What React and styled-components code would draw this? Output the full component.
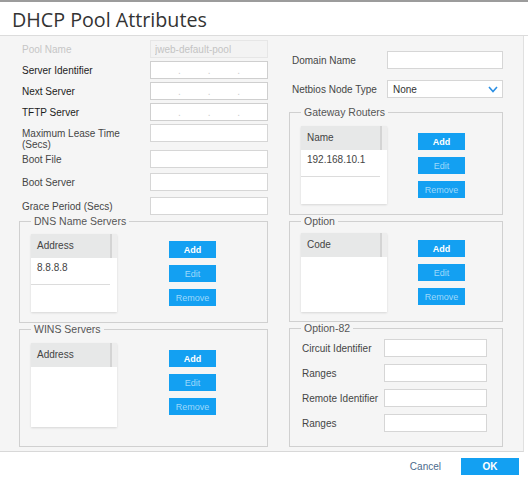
import React from 'react'
import styled, { createGlobalStyle } from 'styled-components'

const GlobalStyle = createGlobalStyle`
  body {
    margin: 0;
    background: #fff;
    font-family: "Liberation Sans", Arial, sans-serif;
  }
`

function IpInput() {
  return (
    <IpBox>
      <Octet />
      <Dot>.</Dot>
      <Octet />
      <Dot>.</Dot>
      <Octet />
      <Dot>.</Dot>
      <Octet />
    </IpBox>
  )
}

function ListTable({ title, rows = [], height }) {
  return (
    <Table $h={height}>
      <TableHead>
        <HeadCell>{title}</HeadCell>
        <HeadGutter />
      </TableHead>
      {rows.map((r) => (
        <TableRow key={r}>{r}</TableRow>
      ))}
    </Table>
  )
}

function Actions({ offset }) {
  return (
    <ActionColumn $offset={offset}>
      <ActionButton>Add</ActionButton>
      <ActionButton disabled>Edit</ActionButton>
      <ActionButton disabled>Remove</ActionButton>
    </ActionColumn>
  )
}

function ListGroup({ legend, title, rows, height, tableHeight, pt, offset }) {
  return (
    <Group $h={height} $pt={pt}>
      <Legend>{legend}</Legend>
      <GroupBody>
        <ListTable title={title} rows={rows} height={tableHeight} />
        <Actions offset={offset} />
      </GroupBody>
    </Group>
  )
}

function App() {
  return (
    <>
      <GlobalStyle />
      <Dialog>
        <Header>
          <Title>DHCP Pool Attributes</Title>
        </Header>

        <Body>
          <Column>
            <FieldRow $h={21}>
              <Label $muted>Pool Name</Label>
              <TextBox disabled readOnly value='jweb-default-pool' />
            </FieldRow>
            <FieldRow $h={21}>
              <Label $dark>Server Identifier</Label>
              <IpInput />
            </FieldRow>
            <FieldRow $h={21}>
              <Label $dark>Next Server</Label>
              <IpInput />
            </FieldRow>
            <FieldRow $h={21}>
              <Label $dark>TFTP Server</Label>
              <IpInput />
            </FieldRow>
            <FieldRow $h={26}>
              <Label>
                Maximum Lease Time
                <br />
                (Secs)
              </Label>
              <TextBox />
            </FieldRow>
            <FieldRow $h={23}>
              <Label>Boot File</Label>
              <TextBox />
            </FieldRow>
            <FieldRow $h={24}>
              <Label>Boot Server</Label>
              <TextBox />
            </FieldRow>
            <FieldRow $h={18}>
              <Label>Grace Period (Secs)</Label>
              <TextBox />
            </FieldRow>

            <ListGroup
              legend='DNS Name Servers'
              title='Address'
              rows={['8.8.8.8']}
              height={108}
              tableHeight={78}
              pt={6}
              offset={52}
            />
            <ListGroup
              legend='WINS Servers'
              title='Address'
              height={124}
              tableHeight={84}
              pt={7}
              offset={52}
            />
          </Column>

          <RightColumn>
            <FieldRow $h={29}>
              <Label $w={98}>Domain Name</Label>
              <TextBox $w={116} />
            </FieldRow>
            <FieldRow $h={26}>
              <Label $w={98}>Netbios Node Type</Label>
              <SelectBox>
                <span>None</span>
                <svg width='10' height='7' viewBox='0 0 10 7'>
                  <polyline points='1,1 5,5.5 9,1' fill='none' stroke='#2b8fe4' strokeWidth='1.6' />
                </svg>
              </SelectBox>
            </FieldRow>

            <ListGroup
              legend='Gateway Routers'
              title='Name'
              rows={['192.168.10.1']}
              height={109}
              tableHeight={78}
              pt={7}
              offset={31}
            />
            <ListGroup
              legend='Option'
              title='Code'
              height={107}
              tableHeight={79}
              pt={5}
              offset={31}
            />

            <Group $h={125} $pt={4}>
              <Legend>Option-82</Legend>
              <FieldRow $h={25}>
                <Label $w={83} $pl={1}>Circuit Identifier</Label>
                <TextBox $w={103} />
              </FieldRow>
              <FieldRow $h={25}>
                <Label $w={83} $pl={1}>Ranges</Label>
                <TextBox $w={103} />
              </FieldRow>
              <FieldRow $h={25}>
                <Label $w={83} $pl={1}>Remote Identifier</Label>
                <TextBox $w={103} />
              </FieldRow>
              <FieldRow $h={25}>
                <Label $w={83} $pl={1}>Ranges</Label>
                <TextBox $w={103} />
              </FieldRow>
            </Group>
          </RightColumn>
        </Body>

        <Footer>
          <LinkButton>Cancel</LinkButton>
          <PrimaryButton>OK</PrimaryButton>
        </Footer>
      </Dialog>
    </>
  )
}

const Dialog = styled.div`
  width: 528px;
  height: 481px;
  box-sizing: border-box;
  border-top: 2px solid #9c9c9c;
  background: #fff;
  display: flex;
  flex-direction: column;
`

const Header = styled.div`
  height: 34px;
  box-sizing: border-box;
  padding: 6px 0 0 12px;
  border-bottom: 1px solid #dcdcdc;
`

const Title = styled.h1`
  margin: 0;
  font-family: "Open Sans", "Liberation Sans", sans-serif;
  font-weight: 400;
  font-size: 19.7px;
  line-height: 24px;
  color: #333;
`

const Body = styled.div`
  width: 524px;
  height: 416px;
  box-sizing: border-box;
  display: grid;
  grid-template-columns: 249px 214px;
  column-gap: 21px;
  align-items: start;
  padding: 4px 0 0 19px;
  background: #f5f5f5;
  border-right: 1px solid #e0e0e0;
  border-bottom: 1px solid #d8d8d8;
`

const Column = styled.div`
  display: flex;
  flex-direction: column;
`

const RightColumn = styled(Column)`
  margin-top: 11px;
`

const FieldRow = styled.div`
  display: flex;
  align-items: flex-start;
  height: ${(p) => p.$h}px;
  flex-shrink: 0;
`

const Label = styled.label`
  box-sizing: border-box;
  width: ${(p) => p.$w || 131}px;
  padding: 4px 0 0 ${(p) => p.$pl ?? 3}px;
  font-size: 10px;
  line-height: 11px;
  white-space: nowrap;
  color: ${(p) => (p.$muted ? '#c6c6c6' : p.$dark ? '#1c1c1c' : '#454545')};
`

const TextBox = styled.input`
  box-sizing: border-box;
  width: ${(p) => p.$w || 118}px;
  height: 18px;
  margin: 0;
  padding: 0 4px;
  border: 1px solid #d6d6d6;
  border-radius: 0;
  background: #fff;
  font: 10px "Liberation Sans", Arial, sans-serif;
  color: #333;
  outline: none;

  &:disabled {
    background: #f3f3f3;
    border-color: #e6e6e6;
    color: #c4c4c4;
  }
`

const IpBox = styled.div`
  box-sizing: border-box;
  width: 118px;
  height: 18px;
  display: flex;
  align-items: flex-end;
  border: 1px solid #cfcfcf;
  background: #fff;
`

const Octet = styled.span`
  flex: 1;
`

const Dot = styled.span`
  font-size: 10px;
  line-height: 14px;
  color: #cdcdcd;
`

const SelectBox = styled.div`
  box-sizing: border-box;
  width: 116px;
  height: 18px;
  display: flex;
  align-items: center;
  justify-content: space-between;
  padding: 0 4px 0 5px;
  border: 1px solid #d6d6d6;
  background: #fff;
  font-size: 10px;
  color: #333;
`

const Group = styled.fieldset`
  box-sizing: border-box;
  height: ${(p) => p.$h}px;
  min-width: 0;
  margin: 0;
  padding: ${(p) => p.$pt}px 11px 0;
  border: 1px solid #d0d0d0;
  flex-shrink: 0;
`

const Legend = styled.legend`
  padding: 0 3px;
  font-size: 10.5px;
  line-height: 13px;
  color: #555;
`

const GroupBody = styled.div`
  display: flex;
  align-items: flex-start;
`

const Table = styled.div`
  box-sizing: border-box;
  width: 86px;
  height: ${(p) => p.$h}px;
  display: flex;
  flex-direction: column;
  background: #fff;
  box-shadow: 0 1px 2px rgba(0, 0, 0, 0.12);
`

const TableHead = styled.div`
  display: flex;
  height: 24px;
  flex-shrink: 0;
  background: #e7e8e8;
`

const HeadCell = styled.div`
  flex: 1;
  padding: 6px 0 0 6px;
  font-size: 10px;
  line-height: 12px;
  color: #444;
`

const HeadGutter = styled.div`
  width: 5px;
  border-left: 2px solid #d4d4d4;
  background: #ededed;
`

const TableRow = styled.div`
  box-sizing: border-box;
  width: 79px;
  height: 27px;
  padding: 4px 0 0 6px;
  border-bottom: 1px solid #dcdcdc;
  font-size: 10px;
  line-height: 12px;
  color: #444;
`

const ActionColumn = styled.div`
  display: flex;
  flex-direction: column;
  gap: 7px;
  padding-top: 7px;
  margin-left: ${(p) => p.$offset}px;
`

const ActionButton = styled.button`
  width: 47px;
  height: 17px;
  padding: 0;
  border: 0;
  border-radius: 0;
  background: #13a0f2;
  font: ${(p) => (p.disabled ? 400 : 700)} 9px "Liberation Sans", Arial, sans-serif;
  color: ${(p) => (p.disabled ? '#9ed8fb' : '#fff')};
`

const Footer = styled.div`
  flex: 1;
  display: flex;
  align-items: center;
  justify-content: flex-end;
  gap: 20px;
  padding-right: 9px;
`

const LinkButton = styled.button`
  padding: 0;
  border: 0;
  background: none;
  font: 10px "Liberation Sans", Arial, sans-serif;
  color: #4c6a8c;
`

const PrimaryButton = styled(ActionButton)`
  width: 58px;
  font-size: 10px;
`

export default App
